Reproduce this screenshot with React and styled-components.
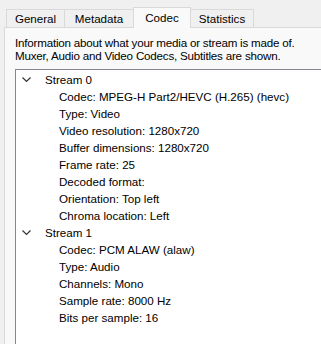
import React from 'react'
import styled, { createGlobalStyle } from 'styled-components'

const Global = createGlobalStyle`
    html, body {
        margin: 0;
        padding: 0;
        background: #f0f0f0;
        overflow: hidden;
    }
    body {
        font-family: "Liberation Sans", Arial, sans-serif;
        font-size: 11.6px;
        color: #000;
    }
`

const Window = styled.div`
    width: 321px;
    height: 344px;
    box-sizing: border-box;
    padding: 7px 0 0 4px;
    display: flex;
    flex-direction: column;
    overflow: hidden;
`

const TabBar = styled.div`
    display: flex;
    align-items: flex-end;
    padding-left: 2px;
    height: 21px;
    position: relative;
    z-index: 1;
    margin-bottom: -1px;
`

const Tab = styled.div`
    box-sizing: border-box;
    width: ${p => p.$w}px;
    height: ${p => (p.$active ? 21 : 19)}px;
    margin-left: ${p => (p.$first ? 0 : -1)}px;
    border: 1px solid #d9d9d9;
    border-bottom: ${p => (p.$active ? 'none' : '1px solid #d9d9d9')};
    background: ${p => (p.$active ? '#f9f9f9' : '#f0f0f0')};
    display: flex;
    align-items: center;
    justify-content: center;
    line-height: 1;
`

const Panel = styled.div`
    flex: 1;
    background: #f9f9f9;
    border: 1px solid #d9d9d9;
    border-right: none;
    border-bottom: none;
    padding: 8px 0 0 10px;
    display: flex;
    flex-direction: column;
`

const Intro = styled.p`
    margin: 0;
    line-height: 13px;
    white-space: nowrap;
    letter-spacing: -0.2px;
`

const Tree = styled.div`
    margin-top: 7px;
    flex: 1;
    background: #fff;
    border-top: 1px solid #828790;
    border-left: 1px solid #828790;
    padding-top: 1px;
`

const Row = styled.div`
    height: 17px;
    display: flex;
    align-items: center;
    padding-left: ${p => (p.$child ? 43 : 5)}px;
    white-space: nowrap;
`

const Chevron = styled.svg`
    width: 9px;
    height: 6px;
    margin-right: 14px;
    margin-left: 1px;
`

const streams = [
    {
        name: 'Stream 0',
        items: [
            'Codec: MPEG-H Part2/HEVC (H.265) (hevc)',
            'Type: Video',
            'Video resolution: 1280x720',
            'Buffer dimensions: 1280x720',
            'Frame rate: 25',
            'Decoded format:',
            'Orientation: Top left',
            'Chroma location: Left',
        ],
    },
    {
        name: 'Stream 1',
        items: [
            'Codec: PCM ALAW (alaw)',
            'Type: Audio',
            'Channels: Mono',
            'Sample rate: 8000 Hz',
            'Bits per sample: 16',
        ],
    },
]

const tabs = [
    { label: 'General', w: 59 },
    { label: 'Metadata', w: 70 },
    { label: 'Codec', w: 58, active: true },
    { label: 'Statistics', w: 64 },
]

export default function App() {
    return (
        <>
            <Global />
            <Window>
                <TabBar>
                    {tabs.map((t, i) => (
                        <Tab key={t.label} $w={t.w} $active={t.active} $first={i === 0}>
                            {t.label}
                        </Tab>
                    ))}
                </TabBar>
                <Panel>
                    <Intro>
                        Information about what your media or stream is made of.
                        <br />
                        Muxer, Audio and Video Codecs, Subtitles are shown.
                    </Intro>
                    <Tree>
                        {streams.map(s => (
                            <React.Fragment key={s.name}>
                                <Row>
                                    <Chevron viewBox="0 0 9 6">
                                        <path d="M0.5 0.5 L4.5 4.5 L8.5 0.5" fill="none" stroke="#333" strokeWidth="1.2" />
                                    </Chevron>
                                    {s.name}
                                </Row>
                                {s.items.map(it => (
                                    <Row key={it} $child>{it}</Row>
                                ))}
                            </React.Fragment>
                        ))}
                    </Tree>
                </Panel>
            </Window>
        </>
    )
}
